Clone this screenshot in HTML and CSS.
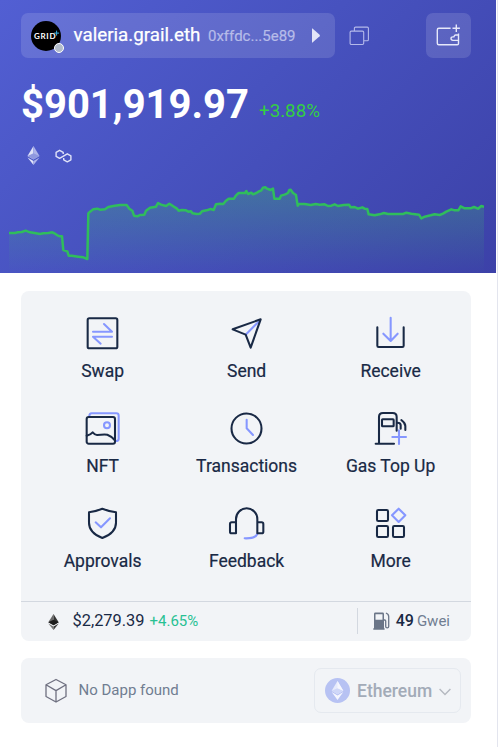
FILE: index.html
```html
<!DOCTYPE html>
<html lang="en">
<head>
    <meta charset="UTF-8">
    <meta name="viewport" content="width=device-width, initial-scale=1.0">
    <title>Wallet</title>
    <link rel="stylesheet" href="styles.css">
</head>
<body>
    <div class="hero">
        <div class="topbar">
            <div class="account">
                <div class="avatar">
                    <svg width="30" height="30" viewBox="0 0 30 30"><path d="M25.6 9.6v5M23.1 12.1h5" stroke="#35b6e8" stroke-width="1"/></svg>
                    <span class="avatar-text">GRID</span>
                    <span class="avatar-dot"></span>
                </div>
                <span class="name">valeria.grail.eth</span>
                <span class="address">0xffdc...5e89</span>
                <svg class="caret" width="8" height="15" viewBox="0 0 8 15"><path d="M0 .8Q0 0 .8.7L7.6 6.8Q8.2 7.5 7.6 8.2L.8 14.3Q0 15 0 14.2z" fill="#e3e5f8"/></svg>
            </div>
            <svg class="copy" width="21" height="20" viewBox="0 0 21 20" fill="none" stroke="#b4b9ea" stroke-width="1.1">
                <rect x="1.1" y="5.1" width="13.6" height="13.4" rx="1.2"/>
                <path d="M5.4 5V2.2q0-1.1 1.1-1.1h11.8q1.1 0 1.1 1.1v11.3q0 1.3-1.1 1.3h-3.4"/>
            </svg>
            <button class="add-wallet">
                <svg width="26" height="24" viewBox="0 0 26 24" fill="none" stroke="#e6e8fa" stroke-width="1.4">
                    <path d="M15.6 5.3H3.9Q2.3 5.3 2.3 6.9v13.3q0 1.5 1.5 1.5h18.4q1.3 0 1.3-1.3V10.6"/>
                    <path d="M23.5 12h-3q-1 0-1.3 1l-.3.9h-.9q-2 0-2 1.7t2 1.8h5.5"/>
                    <path d="M21.3 1.5v7.6M17.5 5.3h7.4"/>
                </svg>
            </button>
        </div>
        <div class="balance">
            <span class="total">$901,919.97</span>
            <span class="change">+3.88%</span>
        </div>
        <div class="chains">
            <svg width="13" height="20" viewBox="0 0 13 20">
                <path d="M6.5 0L.5 10l6 3.6z" fill="#e0e3f8"/>
                <path d="M6.5 0l6 10-6 3.6z" fill="#aeb4e9"/>
                <path d="M6.5 7.2L.5 10l6 3.6 6-3.6z" fill="#8f98df"/>
                <path d="M.5 11.4l6 3.6V19z" fill="#e0e3f8"/>
                <path d="M12.5 11.4l-6 3.6V19z" fill="#aeb4e9"/>
            </svg>
            <svg width="17" height="14" viewBox="0 0 17 14" fill="none" stroke="#dfe2f8" stroke-width="1.4" stroke-linejoin="round">
                <path d="M8.2 5V3.400L4.600 1.300 1.100 3.400v4L4.600 9.400 12.300 4.800l3.600 2v4l-3.600 2-3.600-2V9"/>
            </svg>
        </div>
        <svg class="chart" width="475" height="103" viewBox="27 0 1425 309">
            <defs>
                <linearGradient id="fade" x1="0" y1="0" x2="0" y2="1">
                    <stop offset="0" stop-color="#3fb672" stop-opacity=".34"/>
                    <stop offset="1" stop-color="#3fb672" stop-opacity="0"/>
                </linearGradient>
            </defs>
            <path fill="url(#fade)" d="M27 189 77 182 120 192 157 187 186 199 190 240 202 244 206 257 262 267 265 130 292 116 315 118 325 111 360 105 380 105 397 122 402 137 433 134 438 122 468 110 474 99 498 108 508 101 536 122 558 121 590 132 606 124 641 120 648 103 670 102 686 86 702 86 716 69 735 69 759 73 784 61 796 52 819 56 823 86 839 86 843 77 864 69 872 59 888 75 893 105 1047 104 1052 112 1102 117 1106 133 1152 129 1257 134 1264 145 1304 133 1329 131 1354 118 1375 121 1382 109 1412 115 1452 110V309H27z"/>
            <path fill="none" stroke="#30bd5c" stroke-width="7.5" stroke-linejoin="round" d="M27 189H45L52 187 65 186 77 182 90 187 108 190 120 192 130 190 145 189 157 187 165 191 172 196 180 199H186L190 240 202 244 206 257H215L235 260 250 262 262 267 265 130 270 125 280 118 292 116 300 119 315 118 325 111 340 108 360 105H380L388 116 397 122 402 137 412 139 420 135 433 134 438 122 450 113 468 110 474 99 483 104 498 108 508 101 520 109 530 115 536 122 545 120 558 121 565 125 573 124 578 130 590 132 600 131 606 124 620 121 632 117 641 120 648 103 660 101 670 102 677 93 686 86H702L708 76 716 69H735L739 63 744 72 754 68 759 73 769 69 777 64 784 61 789 53 796 52 801 56 812 60 819 56 823 86H839L843 77 854 74 864 69 868 60 872 59 879 69 888 75 893 107 897 102H914L932 105 947 102 959 104 974 103 984 108 994 107 1004 103 1014 108 1031 105 1047 104 1052 112 1064 111 1074 116 1087 112 1094 116 1102 117 1106 133 1124 136 1139 133 1152 129 1164 132H1209L1219 128 1234 131 1257 134 1264 145 1274 140 1292 136 1304 133 1319 135 1329 131 1339 125 1354 118 1364 121H1375L1382 109 1394 115H1412L1422 111 1434 116 1444 108 1452 110"/>
        </svg>
    </div>

    <div class="panel">
        <div class="actions">
            <div class="action">
                <svg class="icon" viewBox="0 0 120 120">
                    <rect x="14" y="16" width="89" height="90" rx="5"/>
                    <path class="accent" d="M30 56h57L63 33M87 71H30l23 21"/>
                </svg>
                <span>Swap</span>
            </div>
            <div class="action">
                <svg class="icon" viewBox="0 0 120 120">
                    <path class="accent" d="M56 65l42-42"/>
                    <path d="M17 49l84-30-30 85-15-39z"/>
                </svg>
                <span>Send</span>
            </div>
            <div class="action">
                <svg class="icon" viewBox="0 0 120 120">
                    <path d="M19 43v55q0 4 4 4h71q4 0 4-4V43"/>
                    <path class="accent" d="M59 14v69M37 62l22 22 21-22"/>
                </svg>
                <span>Receive</span>
            </div>
            <div class="action">
                <svg class="icon" viewBox="0 0 120 120">
                    <path class="accent" d="M19 25q0-9 7-9h74q7 0 7 7v69q0 7-8 7"/>
                    <circle class="accent" cx="72" cy="52" r="9"/>
                    <rect x="11" y="27" width="85" height="80" rx="6"/>
                    <path d="M11 83q13-4 18-10 8 9 14 8 18-2 30-1 13 5 22 16"/>
                </svg>
                <span>NFT</span>
            </div>
            <div class="action">
                <svg class="icon" viewBox="0 0 120 120">
                    <circle cx="58.5" cy="61.5" r="45"/>
                    <path class="accent" d="M59 35v26l19 20"/>
                </svg>
                <span>Transactions</span>
            </div>
            <div class="action">
                <svg class="icon" viewBox="0 0 120 120">
                    <path d="M14 107h55M24 107V27q0-12 12-12h29q12 0 12 12v41"/>
                    <rect x="33" y="34" width="35" height="21" rx="2"/>
                    <path d="M78 44q11 0 11 7v11M91 36q12 9 12 18v12"/>
                    <path class="accent" d="M84 67v41M64 87h41"/>
                </svg>
                <span>Gas Top Up</span>
            </div>
            <div class="action">
                <svg class="icon" viewBox="0 0 120 120">
                    <path d="M58 17q20 8 41 11v31q0 30-41 46Q18 89 18 59V28q20-3 40-11z"/>
                    <path class="accent" d="M38 58l16 15 27-27"/>
                </svg>
                <span>Approvals</span>
            </div>
            <div class="action">
                <svg class="icon" viewBox="0 0 120 120">
                    <path class="accent" d="M91 93q-6 14-38 13"/>
                    <path d="M27 91V48a32 32 0 0 1 64 0v43M27 58H14q-5 0-5 5v23q0 5 5 5h13M91 58h13q5 0 5 5v23q0 5-5 5H91"/>
                </svg>
                <span>Feedback</span>
            </div>
            <div class="action">
                <svg class="icon" viewBox="0 0 120 120">
                    <rect x="18" y="21" width="33" height="33" rx="4"/>
                    <rect x="18" y="69" width="33" height="33" rx="4"/>
                    <rect x="66" y="69" width="33" height="33" rx="4"/>
                    <path class="accent" d="M83 17l20 20-20 20-20-20z"/>
                </svg>
                <span>More</span>
            </div>
        </div>
        <div class="market">
            <svg class="eth" width="11" height="16" viewBox="0 0 11 16">
                <path d="M5.5 0L.3 8.2l5.2 3z" fill="#6a6a6a"/>
                <path d="M5.5 0l5.2 8.2-5.2 3z" fill="#343434"/>
                <path d="M5.5 5.8L.3 8.2l5.2 3 5.2-3z" fill="#1d1d1d"/>
                <path d="M.3 9.4l5.2 3V16z" fill="#777"/>
                <path d="M10.7 9.4l-5.2 3V16z" fill="#3c3c3b"/>
            </svg>
            <span class="price">$2,279.39</span>
            <span class="price-change">+4.65%</span>
            <div class="gas">
                <svg width="17" height="18" viewBox="0 0 17 18">
                    <path fill="#6a7587" fill-rule="evenodd" d="M1 16.3V2Q1 .6 2.4.6h7.2Q11 .6 11 2v14.3h.6v1.5H.3v-1.5zM2.500 2.300v5.400h7V2.300z"/>
                    <path fill="none" stroke="#6a7587" stroke-width="1.3" d="M11 8h.7q1 0 1 1v5.500q0 1.400 1.500 1.400t1.500-1.400V4.500q0-2.500-2.800-3.500"/>
                </svg>
                <span class="gas-value">49</span>
                <span class="gas-unit">Gwei</span>
            </div>
        </div>
    </div>

    <div class="dapp">
        <svg width="24" height="26" viewBox="0 0 24 26" fill="none" stroke="#6f7080" stroke-width="1.3" stroke-linejoin="round">
            <path d="M12 1.500l10 5.300v11.700L12 24 2 18.500V6.800zM2 6.800l10 5.800 10-5.800M12 12.600V24"/>
        </svg>
        <span class="dapp-text">No Dapp found</span>
        <div class="chain-select">
            <svg width="25" height="25" viewBox="0 0 25 25">
                <circle cx="12.5" cy="12.5" r="12.5" fill="#b7c2f3"/>
                <path d="M12.5 3l-5.8 9.8 5.8 3.4 5.8-3.4z" fill="#e7ebfc"/>
                <path d="M12.5 10.2l-5.8 2.6 5.8 3.4 5.8-3.4z" fill="#cfd7f8"/>
                <path d="M12.5 3v7.2l5.8 2.6zM6.7 14l5.8 3.4L18.300 14l-5.800 8z" fill="#f5f6fe"/>
            </svg>
            <span>Ethereum</span>
            <svg class="chevron" width="12" height="8" viewBox="0 0 12 8" fill="none" stroke="#b5b9c0" stroke-width="1.4"><path d="M.6 1L6 6.5 11.4 1"/></svg>
        </div>
    </div>
</body>
</html>
```
FILE: styles.css
```css
* {
    box-sizing: border-box;
}
body {
    margin: 0;
    width: 498px;
    height: 747px;
    background: #fff;
    border-right: 1px solid #e3e5ee;
    font-family: Roboto, "Liberation Sans", sans-serif;
    color: #192945;
    overflow: hidden;
}
svg {
    display: block;
    flex: none;
}
.hero {
    width: 496px;
    height: 273px;
    padding-top: 13px;
    background: linear-gradient(135deg, #525fd3 0%, #4752bf 45%, #3c41a8 100%);
    color: #fff;
    display: flex;
    flex-direction: column;
}
.topbar {
    display: flex;
    align-items: center;
    height: 45px;
    padding: 0 25px 0 21px;
}
.account {
    display: flex;
    align-items: center;
    width: 314px;
    height: 45px;
    padding-left: 10px;
    border-radius: 7px;
    background: rgba(255, 255, 255, 0.13);
    white-space: nowrap;
}
.avatar {
    position: relative;
    width: 30px;
    height: 30px;
    border-radius: 50%;
    background: #000;
}
.avatar-text {
    position: absolute;
    left: 3px;
    top: 10px;
    font: 700 8px/10px Lato, sans-serif;
    letter-spacing: 0.7px;
}
.avatar-dot {
    position: absolute;
    left: 23px;
    top: 22px;
    width: 10px;
    height: 10px;
    border: 1px solid #fff;
    border-radius: 50%;
    background: #b2bccb;
}
.name {
    width: 127px;
    margin-left: 12.5px;
    font-size: 18.75px;
    line-height: 22px;
    margin-top: -2px;
    -webkit-text-stroke: 0.25px #fff;
}
.address {
    width: 87px;
    margin-left: 7.5px;
    font-size: 15px;
    color: #b7bce9;
    -webkit-text-stroke: 0.2px #b7bce9;
}
.caret {
    margin-left: 17px;
}
.copy {
    margin-left: 14px;
}
.add-wallet {
    display: flex;
    align-items: center;
    justify-content: center;
    width: 45px;
    height: 45px;
    margin-left: auto;
    padding: 0 0 2px;
    border: none;
    border-radius: 7px;
    background: rgba(255, 255, 255, 0.13);
}
.add-wallet svg {
    margin-left: -2px;
}
.balance {
    display: flex;
    align-items: baseline;
    height: 47px;
    margin-top: 23px;
    padding-left: 21px;
}
.total {
    font-size: 40px;
    font-weight: 700;
    line-height: 47px;
}
.change {
    position: relative;
    top: -1px;
    margin-left: 10px;
    font-size: 18.75px;
    color: #33ce43;
}
.chains {
    display: flex;
    align-items: center;
    gap: 15px;
    height: 20px;
    margin-top: 18px;
    padding-left: 27px;
}
.chart {
    margin: auto 0 0 9px;
}
.panel {
    width: 450px;
    height: 350px;
    margin: 18px 0 0 21px;
    border-radius: 8px;
    background: #f2f4f7;
}
.actions {
    display: grid;
    grid-template-columns: repeat(3, 144px);
    grid-auto-rows: 95px;
    height: 311px;
    padding: 22px 8px 0 9.6px;
    border-bottom: 1px solid #d3d8e0;
}
.action {
    display: flex;
    flex-direction: column;
    align-items: center;
    font-size: 17.5px;
    line-height: 20px;
    white-space: nowrap;
    -webkit-text-stroke: 0.2px #192945;
}
.action span {
    margin-top: 8px;
}
.icon {
    width: 40px;
    height: 40px;
    fill: none;
    stroke: #192945;
    stroke-width: 6.2;
    stroke-linecap: round;
    stroke-linejoin: round;
}
.accent {
    stroke: #8697ff;
}
.market {
    display: flex;
    align-items: center;
    height: 39px;
    padding: 0 21px 2px 27px;
}
.price {
    margin-left: 13.5px;
    font-size: 16.4px;
}
.price-change {
    margin-left: 5px;
    font-size: 15px;
    color: #27c193;
}
.eth {
    margin-top: 2px;
}
.gas {
    display: flex;
    align-items: center;
    height: 26px;
    margin-left: auto;
    padding-left: 15px;
    border-left: 1px solid #d3d8e0;
}
.gas-value {
    margin-left: 6px;
    font-size: 16px;
    font-weight: 500;
}
.gas-unit {
    margin-left: 3px;
    font-size: 15px;
    color: #707d91;
}
.dapp {
    display: flex;
    align-items: center;
    width: 450px;
    height: 65px;
    margin: 17px 0 0 21px;
    padding: 0 10px 0 23px;
    border-radius: 8px;
    background: #f2f4f7;
}
.dapp-text {
    margin: -1px 0 0 10.5px;
    font-size: 15px;
    color: #707d91;
}
.chain-select {
    display: flex;
    align-items: center;
    width: 147px;
    height: 45px;
    margin-left: auto;
    padding-left: 10px;
    border: 1px solid #e5e9ef;
    border-radius: 7px;
    font-size: 17.5px;
    font-weight: 500;
    color: #a3abb8;
}
.chain-select span {
    width: 75px;
    margin: 0 7px 0 7px;
}
.chevron {
    margin-top: 3px;
}
```
